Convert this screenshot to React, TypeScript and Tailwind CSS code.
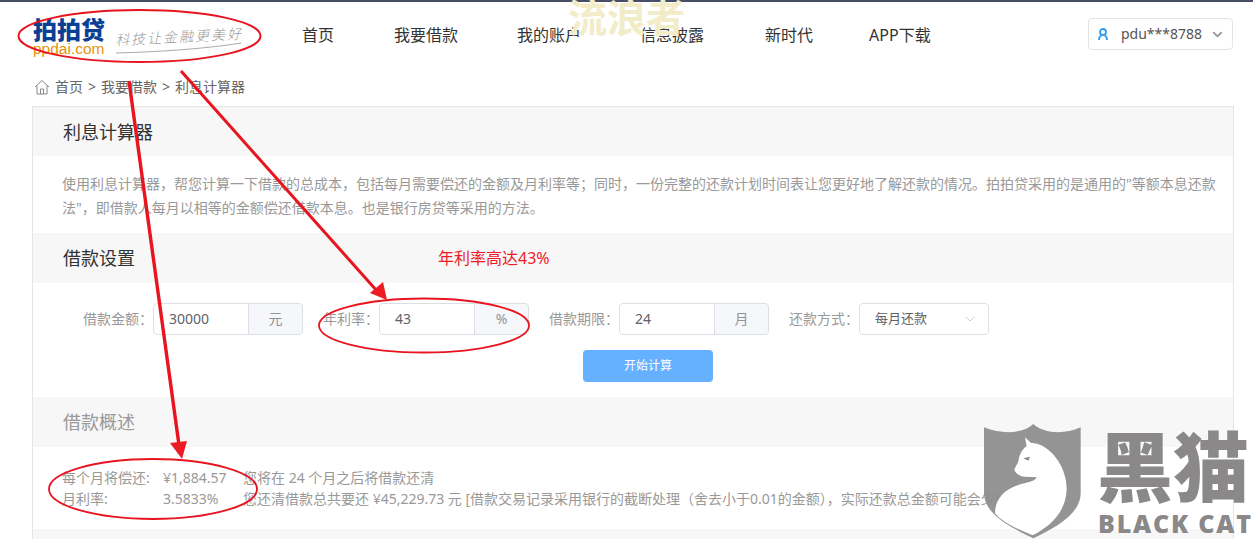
import React from "react";
import { ChevronDown } from "lucide-react";

const font = { fontFamily: '"Noto Sans", "Noto Sans CJK SC", sans-serif' };

function Field({ label, value, unit, labelClass }: { label: string; value: string; unit: string; labelClass: string }) {
  return (
    <div className="flex items-center">
      <span className={`${labelClass} text-right text-sm text-[#999]`}>{label}</span>
      <div className="flex h-[32px] w-[150px] rounded border border-[#dcdfe6] text-sm">
        <div className="flex flex-1 items-center pl-[15px] text-[#606266]">{value}</div>
        <div className="flex w-[54px] items-center justify-center rounded-r border-l border-[#dcdfe6] bg-[#f5f7fa] text-[#909399]">{unit}</div>
      </div>
    </div>
  );
}

function SectionHead({ title, muted, extra, short }: { title: string; muted?: boolean; extra?: string; short?: boolean }) {
  return (
    <div className={`flex ${short ? "h-[49px]" : "h-[50px]"} items-center bg-[#f7f7f7] pl-[30px] text-lg ${muted ? "text-[#999]" : "text-[#333]"}`}>
      <span>{title}</span>
      {extra ? <span className="ml-[303px] text-base text-[#ed1c24]">{extra}</span> : null}
    </div>
  );
}

export default function App() {
  const nav: [string, string][] = [
    ["首页", "ml-0"],
    ["我要借款", "ml-[60px]"],
    ["我的账户", "ml-[59px]"],
    ["信息披露", "ml-[59px]"],
    ["新时代", "ml-[61px]"],
    ["APP下载", "ml-[56px]"],
  ];
  return (
    <div className="relative h-[539px] w-[1253px] overflow-hidden bg-white" style={font}>
      <div className="h-[2px] bg-[#474e66]" />

      <header className="flex h-[66px] items-center pl-[33px] pr-[20px]">
        <div className="relative flex w-[269px] items-center">
          <div className="mt-[6px] flex w-[72px] flex-col">
            <span className="text-[24px] font-black leading-[22px] text-[#0b3f94]">拍拍贷</span>
            <span className="text-[15.5px] leading-[16px] text-[#e8930c]" style={{ fontFamily: '"Liberation Sans", sans-serif' }}>ppdai.com</span>
          </div>
          <span className="ml-[10px] mt-[2px] -rotate-3 text-[14px] font-light italic tracking-[2px] text-[#9a9a9a]">科技让金融更美好</span>
          <svg className="absolute left-[82px] top-[22px]" width="130" height="20" fill="none" stroke="#aaa" strokeWidth="1">
            <path d="M1 18C40 17 90 14 126 8" />
          </svg>
        </div>
        <nav className="flex text-base text-[#333]">
          {nav.map(([t, c]) => (
            <span key={t} className={c}>{t}</span>
          ))}
        </nav>
        <div className="ml-auto flex h-[32px] w-[145px] -translate-y-[1px] items-center rounded border border-[#e4e4e4] pl-[7px] text-sm text-[#555]">
          <svg width="14" height="14" viewBox="0 0 14 14" fill="none" stroke="#2d9cf4" strokeWidth="1.8">
            <circle cx="7" cy="5" r="3" />
            <path d="M3 13c0-2.5 1-4 2.5-4.5M11 13c0-2.5-1-4-2.5-4.5" />
          </svg>
          <span className="ml-[11px]">pdu***8788</span>
          <ChevronDown className="ml-[8px] text-[#999]" size={15} strokeWidth={3} />
        </div>
      </header>

      <div className="flex h-[38px] items-center pl-[34px] text-sm text-[#666]">
        <svg width="16" height="16" viewBox="0 0 16 16" fill="none" stroke="#888" strokeWidth="1">
          <path d="M1 8 8 1.5 15 8M3 6.5V15h10V6.5M6.5 15v-5h3v5" />
        </svg>
        <span className="ml-[5px]">首页</span>
        <span className="mx-[5px]">&gt;</span>
        <span>我要借款</span>
        <span className="mx-[5px]">&gt;</span>
        <span>利息计算器</span>
      </div>

      <main className="ml-[32px] mr-[19px] border border-[#e5e5e5]">
        <SectionHead title="利息计算器" short />
        <p className="h-[77px] pl-[29px] pr-[14px] pt-[16px] text-sm leading-[24px] text-[#999]">
          使用利息计算器，帮您计算一下借款的总成本，包括每月需要偿还的金额及月利率等；同时，一份完整的还款计划时间表让您更好地了解还款的情况。拍拍贷采用的是通用的"等额本息还款法"，即借款人每月以相等的金额偿还借款本息。也是银行房贷等采用的方法。
        </p>
        <SectionHead title="借款设置" extra="年利率高达43%" />
        <div className="h-[114px] pt-[20px]">
          <div className="flex gap-[19px] pl-[49px]">
            <Field label="借款金额：" value="30000" unit="元" labelClass="w-[71px]" />
            <Field label="年利率：" value="43" unit="%" labelClass="w-[57px]" />
            <Field label="借款期限：" value="24" unit="月" labelClass="w-[71px]" />
            <div className="flex items-center">
              <span className="w-[71px] text-right text-sm text-[#999]">还款方式：</span>
              <div className="flex h-[32px] w-[130px] items-center rounded border border-[#dcdfe6] pl-[15px] pr-[10px] text-[13px] text-[#606266]">
                每月还款
                <ChevronDown className="ml-auto text-[#c0c4cc]" size={16} strokeWidth={1.2} />
              </div>
            </div>
          </div>
          <button className="ml-[550px] mt-[15px] flex h-[32px] w-[130px] items-center justify-center rounded bg-[#66b1ff] text-xs text-white">
            开始计算
          </button>
        </div>
        <SectionHead title="借款概述" muted />
        <div className="h-[82px] pl-[29px] pt-[20px] text-sm leading-[21px] text-[#999]">
          <div className="flex">
            <span className="w-[101px]">每个月将偿还:</span>
            <span className="w-[80px]">¥1,884.57</span>
            <span>您将在 24 个月之后将借款还清</span>
          </div>
          <div className="flex">
            <span className="w-[101px]">月利率:</span>
            <span className="w-[80px]">3.5833%</span>
            <span>您还清借款总共要还 ¥45,229.73 元 [借款交易记录采用银行的截断处理（舍去小于0.01的金额），实际还款总金额可能会少]</span>
          </div>
        </div>
        <div className="h-[40px] bg-[#f7f7f7]" />
      </main>

      {/* Watermark */}
      <div className="absolute left-[568px] top-[-6px] text-[39px] font-bold leading-[46px] text-[#f2ecc8]">流浪者</div>

      {/* Red annotations */}
      <svg className="absolute left-0 top-0" width="1253" height="539" fill="none" stroke="#e8141f">
        <ellipse cx="139.5" cy="36" rx="121" ry="26" strokeWidth="2" />
        <ellipse cx="424" cy="325.5" rx="105" ry="27" strokeWidth="1.8" />
        <ellipse cx="153" cy="489" rx="104" ry="30" strokeWidth="1.8" />
        <path d="M129 81 179 445" strokeWidth="3.4" />
        <path d="M181 71 377 291" strokeWidth="3" />
        <path d="M182 459 170 443 187 441Z" fill="#ed1c24" stroke="none" />
        <path d="M387 300 370 293 383 282Z" fill="#ed1c24" stroke="none" />
      </svg>

      {/* Black Cat watermark */}
      <svg className="absolute left-[960px] top-[410px]" width="293" height="129" viewBox="0 0 879 387">
        <path
          d="M72 52C130 75 190 70 220 42C250 70 310 75 362 52V250C362 315 280 355 220 385C160 355 72 315 72 250Z"
          fill="#8a8888"
          fillOpacity="0.9"
        />
        <path
          d="M195 82 212 98C270 100 320 170 320 235C320 305 270 350 218 376C175 360 125 335 105 310C105 270 130 240 175 225C200 218 225 215 230 202L195 200C180 200 165 190 163 178L175 155C178 130 190 115 200 108Z"
          fill="#fff"
        />
        <path d="M190 145 210 140 205 152Z" fill="#8a8888" />
      </svg>
      <div className="absolute left-[1097px] top-[424px] whitespace-nowrap text-[76px] font-black leading-[86px] text-[#8a8888]">黑猫</div>
      <div className="absolute left-[1098px] top-[506px] whitespace-nowrap text-[25px] font-extrabold leading-[34px] tracking-[1.8px] text-[#8a8888]" style={{ fontFamily: '"Open Sans", sans-serif' }}>BLACK CAT</div>
    </div>
  );
}
